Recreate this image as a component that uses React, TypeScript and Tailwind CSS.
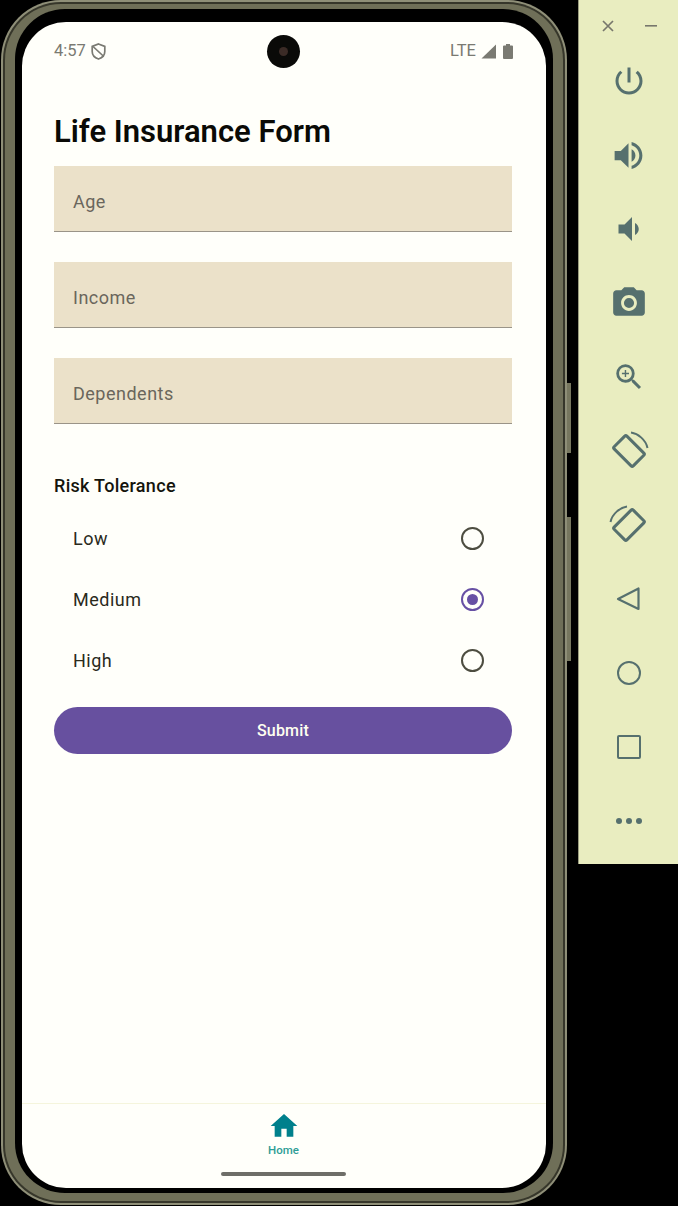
const sans = "font-['Roboto',sans-serif]";

function Icon({ d, size, cls }: { d: string; size: number; cls: string }) {
  return (
    <svg width={size} height={size} viewBox="0 0 24 24" className={cls} fill="currentColor">
      <path d={d} />
    </svg>
  );
}

function Rotate({ flip }: { flip?: boolean }) {
  return (
    <svg width="40" height="40" viewBox="0 0 40 40" fill="none" stroke="currentColor" className={flip ? "-scale-x-100" : ""}>
      <rect x="11" y="6.5" width="18" height="27" rx="1.5" strokeWidth="3" transform="rotate(-45 20 20)" />
      <path d="M22 1.5 C29 2.5 37 9 38.5 17" strokeWidth="2" />
    </svg>
  );
}

function Field({ label, cls }: { label: string; cls: string }) {
  return (
    <div className={`h-[66px] bg-[#ebe1c9] border-b border-[#9a9488] flex items-center pl-[19px] pt-[5px] text-[18px] tracking-[0.5px] text-[#6a665c] ${cls}`}>
      {label}
    </div>
  );
}

function Radio({ label, selected }: { label: string; selected?: boolean }) {
  return (
    <div className="h-[61px] flex items-center justify-between pl-[19px] pr-[28px] pb-[1px] text-[18px] tracking-[0.5px] text-[#2a2a1c]">
      <span>{label}</span>
      {selected ? (
        <span className="w-[23px] h-[23px] rounded-full border-2 border-[#6750a4] flex items-center justify-center">
          <span className="w-[11px] h-[11px] rounded-full bg-[#6750a4]" />
        </span>
      ) : (
        <span className="w-[23px] h-[23px] rounded-full border-2 border-[#4d4d40]" />
      )}
    </div>
  );
}

const VOL_UP = "M3 9v6h4l5 5V4L7 9H3zm13.5 3c0-1.77-1.02-3.29-2.5-4.03v8.05c1.48-.73 2.5-2.25 2.5-4.02zM14 3.23v2.06c2.89.86 5 3.54 5 6.71s-2.11 5.85-5 6.71v2.06c4.01-.91 7-4.49 7-8.77s-2.99-7.86-7-8.77z";
const VOL_DOWN = "M18.5 12c0-1.77-1.02-3.29-2.5-4.03v8.05c1.48-.73 2.5-2.25 2.5-4.02zM5 9v6h4l5 5V4L9 9H5z";
const POWER = "M13 3h-2v10h2V3zm4.83 2.17l-1.42 1.42C17.99 7.86 19 9.81 19 12c0 3.87-3.13 7-7 7s-7-3.13-7-7c0-2.19 1.01-4.14 2.58-5.42L6.17 5.17C4.23 6.82 3 9.26 3 12c0 4.97 4.03 9 9 9s9-4.03 9-9c0-2.74-1.23-5.18-3.17-6.83z";
const CAMERA = "M12 15.2a3.2 3.2 0 1 0 0-6.4 3.2 3.2 0 0 0 0 6.4z M9 2L7.17 4H4c-1.1 0-2 .9-2 2v12c0 1.1.9 2 2 2h16c1.1 0 2-.9 2-2V6c0-1.1-.9-2-2-2h-3.17L15 2H9zm3 15c-2.76 0-5-2.24-5-5s2.24-5 5-5 5 2.24 5 5-2.24 5-5 5z";
const ZOOM = "M15.5 14h-.79l-.28-.27A6.471 6.471 0 0 0 16 9.5 6.5 6.5 0 1 0 9.5 16c1.61 0 3.09-.59 4.23-1.57l.27.28v.79l5 4.99L20.49 19l-4.99-5zm-6 0C7.01 14 5 11.99 5 9.5S7.01 5 9.5 5 14 7.01 14 9.5 11.99 14 9.5 14z M12 10h-2v2H9v-2H7V9h2V7h1v2h2v1z";
const HOME = "M10 20v-6h4v6h5v-8h3L12 3 2 12h3v8z";

function Tool({ children }: { children: React.ReactNode }) {
  return <div className="h-[74px] flex items-center justify-center text-[#56706e]">{children}</div>;
}

export default function App() {
  return (
    <div className={`w-[678px] h-[1206px] bg-black flex overflow-hidden ${sans}`}>
      {/* Phone */}
      <div className="w-[578px] shrink-0 pl-px">
        <div className="relative w-[566px] h-[1205px] rounded-[60px] bg-[#8f8f78] p-[2px]">
          {/* side buttons */}
          <div className="absolute right-[-4px] top-[383px] w-[4px] h-[70px] bg-[#77775f]" />
          <div className="absolute right-[-4px] top-[517px] w-[4px] h-[144px] bg-[#77775f]" />
          <div className="w-full h-full rounded-[58px] bg-[#36362a] p-[2px]">
            <div className="w-full h-full rounded-[56px] bg-[#6f6f58] pt-[5px] pb-[8px] px-[10px]">
              <div className="w-full h-full rounded-[50px] bg-black pt-[13px] pb-[5px] px-[7px]">
                {/* Screen */}
                <div className="w-full h-full rounded-[44px] bg-[#fffffa] overflow-hidden flex flex-col">
                  {/* Status bar */}
                  <div className="relative h-[58px] shrink-0 flex items-center justify-between pl-[32px] pr-[33px] pt-[1px] text-[#7a7a72] text-[16.5px]">
                    <div className="flex items-center gap-[5px]">
                      <span>4:57</span>
                      <svg width="15" height="17" viewBox="0 0 15 17" fill="none" stroke="currentColor" strokeWidth="1.7">
                        <path d="M7.5 1 L13.8 3.4 V8.5 C13.8 12.3 11.2 14.8 7.5 16 C3.8 14.8 1.2 12.3 1.2 8.5 V3.4 Z" />
                        <path d="M2 3.5 L12.8 13.5" />
                      </svg>
                    </div>
                    <span className="absolute left-[245px] top-[13px] w-[33px] h-[33px] rounded-full bg-[#0a0a08] flex items-center justify-center">
                      <span className="w-[9px] h-[9px] rounded-full bg-[#3b2b26]" />
                    </span>
                    <div className="flex items-center">
                      <span>LTE</span>
                      <svg width="15" height="15" viewBox="0 0 15 15" className="ml-[5px]" fill="currentColor">
                        <path d="M15 0.5 V14.5 H0.5 Z" />
                      </svg>
                      <svg width="10" height="15" viewBox="0 0 10 15" className="ml-[7px]" fill="currentColor">
                        <path d="M3 0 H7 V1.5 H9 A1 1 0 0 1 10 2.5 V14 A1 1 0 0 1 9 15 H1 A1 1 0 0 1 0 14 V2.5 A1 1 0 0 1 1 1.5 H3 Z" />
                      </svg>
                    </div>
                  </div>

                  {/* Form */}
                  <div className="pl-[32px] pr-[34px] flex flex-col">
                    <h1 className="mt-[33px] h-[38px] leading-[38px] text-[31px] font-semibold text-[#0a0a06]">Life Insurance Form</h1>
                    <Field label="Age" cls="mt-[15px]" />
                    <Field label="Income" cls="mt-[30px]" />
                    <Field label="Dependents" cls="mt-[30px]" />
                    <div className="mt-[51px] h-[22px] leading-[22px] text-[18px] tracking-[0.3px] font-medium text-[#14140c]">Risk Tolerance</div>
                    <div className="mt-[11px]">
                      <Radio label="Low" />
                      <Radio label="Medium" selected />
                      <Radio label="High" />
                    </div>
                    <button className="mt-[16px] h-[47px] rounded-full bg-[#67509f] text-[#fffff0] text-[16px] tracking-[0.2px] font-medium">Submit</button>
                  </div>

                  {/* Bottom nav */}
                  <div className="mt-auto h-[85px] border-t border-[#f5f5dc] flex flex-col items-center pr-px">
                    <Icon d={HOME} size={32} cls="text-[#00808c] mt-[6px]" />
                    <span className="text-[11.5px] leading-[14px] font-medium text-[#2e9d96] mt-[1px]">Home</span>
                    <span className="w-[125px] h-[4px] rounded-full bg-[#6e6e68] mt-[15px]" />
                  </div>
                </div>
              </div>
            </div>
          </div>
        </div>
      </div>

      {/* Emulator toolbar */}
      <div className="w-[100px] h-[864px] shrink-0 bg-[#e9edc0] border-l border-[#9a9c80] flex flex-col relative">
        <div className="h-[44px] flex items-center justify-between pl-[22px] pr-[21px] pt-[7px] text-[#77776c]">
          <svg width="14" height="14" viewBox="0 0 14 14" stroke="currentColor" strokeWidth="1.7"><path d="M2 2 L12 12 M12 2 L2 12" /></svg>
          <svg width="12" height="2" viewBox="0 0 12 2" fill="currentColor"><rect width="12" height="1.6" /></svg>
        </div>
        <Tool><Icon d={POWER} size={36} cls="" /></Tool>
        <Tool><Icon d={VOL_UP} size={37} cls="" /></Tool>
        <Tool><Icon d={VOL_DOWN} size={36} cls="" /></Tool>
        <Tool><Icon d={CAMERA} size={38} cls="" /></Tool>
        <Tool><Icon d={ZOOM} size={34} cls="" /></Tool>
        <Tool><Rotate /></Tool>
        <Tool><Rotate flip /></Tool>
        <Tool>
          <svg width="28" height="28" viewBox="0 0 28 28" fill="none" stroke="currentColor" strokeWidth="2.2" strokeLinejoin="round"><path d="M23.5 3.5 V24 L3 14 Z" /></svg>
        </Tool>
        <Tool><span className="w-[24px] h-[24px] rounded-full border-[2.5px] border-current" /></Tool>
        <Tool><span className="w-[24px] h-[24px] rounded-[2px] border-[2.5px] border-current" /></Tool>
        <Tool>
          <span className="flex gap-[4px]">
            <span className="w-[6px] h-[6px] rounded-full bg-current" />
            <span className="w-[6px] h-[6px] rounded-full bg-current" />
            <span className="w-[6px] h-[6px] rounded-full bg-current" />
          </span>
        </Tool>
      </div>
    </div>
  );
}
